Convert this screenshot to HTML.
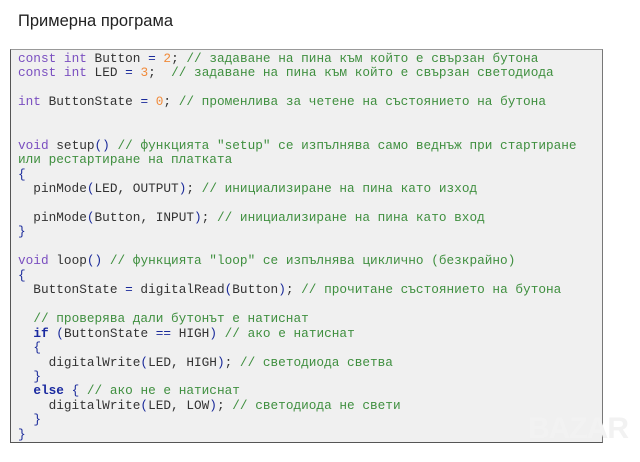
<!DOCTYPE html>
<html><head><meta charset="utf-8"><style>
body{margin:0;background:#fff;width:640px;height:462px;overflow:hidden;position:relative}
h1{position:absolute;left:18px;top:12px;margin:0;font:16.5px "Liberation Sans","DejaVu Sans",sans-serif;color:#222;font-weight:normal}
.box{position:absolute;left:10px;top:49px;width:593px;height:394px;background:#f0f0f0;border:1px solid #555;border-top-color:#999;border-right-color:#777;box-sizing:border-box}
pre{position:absolute;left:18px;top:52px;margin:0;font:12.75px/14.45px "Liberation Mono","DejaVu Sans Mono",monospace;color:#333;white-space:pre}
.k{color:#7a4fc0}.n{color:#f08a3a}.c{color:#3f8f3f}.b{color:#1a2a9a}.kb{color:#1a2aa0;font-weight:bold}
.wm{position:absolute;left:528px;top:412px;font:bold 30px "Liberation Sans",sans-serif;color:#f2f2f2;letter-spacing:-1px}
</style></head><body>
<h1>Примерна програма</h1>
<div class="box"></div>
<pre><span class="k">const</span> <span class="k">int</span> Button <span class="b">=</span> <span class="n">2</span>; <span class="c">// задаване на пина към който е свързан бутона</span>
<span class="k">const</span> <span class="k">int</span> LED <span class="b">=</span> <span class="n">3</span>;  <span class="c">// задаване на пина към който е свързан светодиода</span>

<span class="k">int</span> ButtonState <span class="b">=</span> <span class="n">0</span>; <span class="c">// променлива за четене на състоянието на бутона</span>


<span class="k">void</span> setup<span class="b">()</span> <span class="c">// функцията "setup" се изпълнява само веднъж при стартиране
или рестартиране на платката</span>
<span class="b">{</span>
  pinMode<span class="b">(</span>LED, OUTPUT<span class="b">)</span>; <span class="c">// инициализиране на пина като изход</span>

  pinMode<span class="b">(</span>Button, INPUT<span class="b">)</span>; <span class="c">// инициализиране на пина като вход</span>
<span class="b">}</span>

<span class="k">void</span> loop<span class="b">()</span> <span class="c">// функцията "loop" се изпълнява циклично (безкрайно)</span>
<span class="b">{</span>
  ButtonState <span class="b">=</span> digitalRead<span class="b">(</span>Button<span class="b">)</span>; <span class="c">// прочитане състоянието на бутона</span>

  <span class="c">// проверява дали бутонът е натиснат</span>
  <span class="kb">if</span> <span class="b">(</span>ButtonState <span class="b">==</span> HIGH<span class="b">)</span> <span class="c">// ако е натиснат</span>
  <span class="b">{</span>
    digitalWrite<span class="b">(</span>LED, HIGH<span class="b">)</span>; <span class="c">// светодиода светва</span>
  <span class="b">}</span>
  <span class="kb">else</span> <span class="b">{</span> <span class="c">// ако не е натиснат</span>
    digitalWrite<span class="b">(</span>LED, LOW<span class="b">)</span>; <span class="c">// светодиода не свети</span>
  <span class="b">}</span>
<span class="b">}</span></pre>
<div class="wm">BAZAR</div>
</body></html>
